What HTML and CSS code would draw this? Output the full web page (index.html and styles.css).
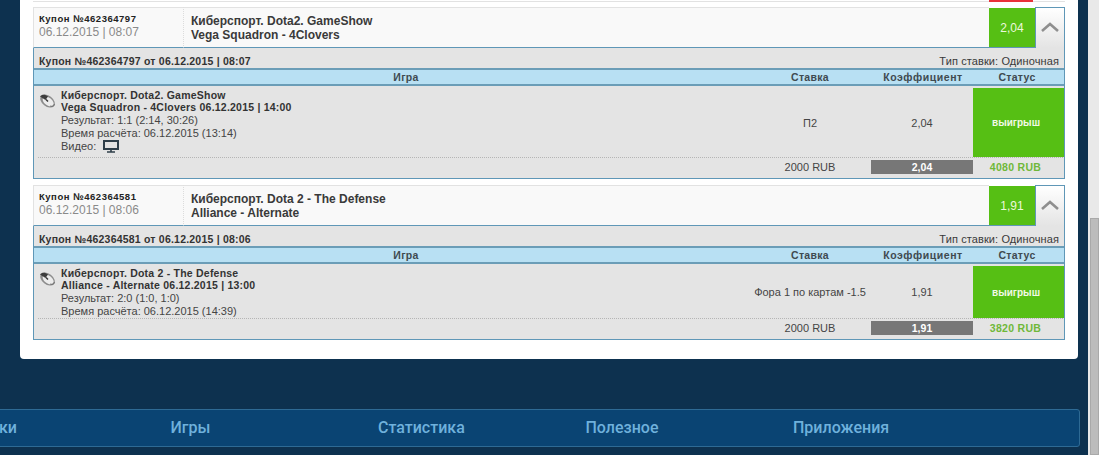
FILE: index.html
```html
<!DOCTYPE html>
<html lang="ru">
<head>
<meta charset="utf-8">
<title>Купоны</title>
<link rel="stylesheet" href="styles.css">
</head>
<body>
<div class="page">
  <div class="main">
    <div class="card">
      <div class="prev"><span class="prev-odd"></span><span class="prev-end"></span></div>

      <section class="coupon">
        <div class="head">
          <div class="head-id">
            <div class="head-no">Купон №462364797</div>
            <div class="head-date">06.12.2015 | 08:07</div>
          </div>
          <div class="head-event">Киберспорт. Dota2. GameShow<br>Vega Squadron - 4Clovers</div>
          <div class="head-odd">2,04</div>
          <div class="toggle"><svg class="chev" width="18" height="10" viewBox="0 0 18 10"><path d="M1 9 L9 2 L17 9" fill="none" stroke="#8f8f8f" stroke-width="2.6"/></svg></div>
        </div>
        <div class="body">
          <div class="sub"><b>Купон №462364797 от 06.12.2015 | 08:07</b><span>Тип ставки: Одиночная</span></div>
          <div class="grid thead"><div class="th-game">Игра</div><div>Ставка</div><div class="th-odd">Коэффициент</div><div class="th-status">Статус</div></div>
          <div class="grid row row-tall">
            <div class="game">
              <svg class="mouse" width="17" height="16" viewBox="0 0 17 16"><ellipse cx="8.5" cy="8" rx="8.2" ry="5.4" transform="rotate(38 8.5 8)" fill="#8d8d8d"/><ellipse cx="9.2" cy="8.6" rx="6.4" ry="3.8" transform="rotate(38 9.2 8.6)" fill="#ececec"/><path d="M1 3.5 C3 1 6 1.2 9 3.5 L6.5 7 Z" fill="#3d3d3d"/><path d="M7 6.5 L9 8.5" stroke="#333" stroke-width="1.5"/><path d="M11 13 C13 14 15 13 15.5 11" fill="none" stroke="#777" stroke-width="1.2"/></svg>
              <div class="game-text">
                <div class="game-title">Киберспорт. Dota2. GameShow<br>Vega Squadron - 4Clovers 06.12.2015 | 14:00</div>
                <div class="game-info">Результат: 1:1 (2:14, 30:26)<br>Время расчёта: 06.12.2015 (13:14)<br>
                  <span class="video">Видео: <svg class="monitor" width="16" height="13" viewBox="0 0 16 13"><path d="M1 1 H15 V9 H1Z" fill="none" stroke="#2f3f4a" stroke-width="2"/><path d="M8 9 V12 M4 12 H12" stroke="#2f3f4a" stroke-width="1.6"/></svg></span>
                </div>
              </div>
            </div>
            <div class="cell">П2</div>
            <div class="cell">2,04</div>
            <div class="status">выигрыш</div>
          </div>
          <div class="grid total">
            <div></div>
            <div class="cell">2000 RUB</div>
            <div class="total-odd">2,04</div>
            <div class="total-win">4080 RUB</div>
          </div>
        </div>
      </section>

      <section class="coupon">
        <div class="head">
          <div class="head-id">
            <div class="head-no">Купон №462364581</div>
            <div class="head-date">06.12.2015 | 08:06</div>
          </div>
          <div class="head-event">Киберспорт. Dota 2 - The Defense<br>Alliance - Alternate</div>
          <div class="head-odd">1,91</div>
          <div class="toggle"><svg class="chev" width="18" height="10" viewBox="0 0 18 10"><path d="M1 9 L9 2 L17 9" fill="none" stroke="#8f8f8f" stroke-width="2.6"/></svg></div>
        </div>
        <div class="body">
          <div class="sub"><b>Купон №462364581 от 06.12.2015 | 08:06</b><span>Тип ставки: Одиночная</span></div>
          <div class="grid thead"><div class="th-game">Игра</div><div>Ставка</div><div class="th-odd">Коэффициент</div><div class="th-status">Статус</div></div>
          <div class="grid row row-short">
            <div class="game">
              <svg class="mouse" width="17" height="16" viewBox="0 0 17 16"><ellipse cx="8.5" cy="8" rx="8.2" ry="5.4" transform="rotate(38 8.5 8)" fill="#8d8d8d"/><ellipse cx="9.2" cy="8.6" rx="6.4" ry="3.8" transform="rotate(38 9.2 8.6)" fill="#ececec"/><path d="M1 3.5 C3 1 6 1.2 9 3.5 L6.5 7 Z" fill="#3d3d3d"/><path d="M7 6.5 L9 8.5" stroke="#333" stroke-width="1.5"/><path d="M11 13 C13 14 15 13 15.5 11" fill="none" stroke="#777" stroke-width="1.2"/></svg>
              <div class="game-text">
                <div class="game-title">Киберспорт. Dota 2 - The Defense<br>Alliance - Alternate 06.12.2015 | 13:00</div>
                <div class="game-info">Результат: 2:0 (1:0, 1:0)<br>Время расчёта: 06.12.2015 (14:39)</div>
              </div>
            </div>
            <div class="cell">Фора 1 по картам -1.5</div>
            <div class="cell">1,91</div>
            <div class="status">выигрыш</div>
          </div>
          <div class="grid total">
            <div></div>
            <div class="cell">2000 RUB</div>
            <div class="total-odd">1,91</div>
            <div class="total-win">3820 RUB</div>
          </div>
        </div>
      </section>
    </div>

    <nav class="footer">
      <a>Ставки</a><a>Игры</a><a>Статистика</a><a>Полезное</a><a>Приложения</a>
    </nav>
  </div>
  <div class="scrollbar"><div class="thumb"></div></div>
</div>
</body>
</html>
```
FILE: styles.css
```css
* { box-sizing: border-box; }
html, body { margin: 0; padding: 0; height: 100%; overflow: hidden; }
body {
  background: #0d314f;
  font-family: "Liberation Sans", Arial, sans-serif;
  font-size: 11px;
  color: #3a3a3a;
}
.page { display: flex; height: 455px; overflow: hidden; }
.main { flex: 1; min-width: 0; }
.scrollbar { width: 11px; background: #e9e9e9; padding: 218px 0 0 2px; }
.thumb { height: 100%; background: #bcbcbc; border: 1px solid #a9a9a9; }

.card {
  margin: 0 10px 0 20px;
  height: 359px;
  padding: 0 13px;
  background: #fff;
  border-radius: 0 0 4px 4px;
}
.prev { display: flex; height: 2px; margin-bottom: 5px; background: #e2e2e2; border-top: 1px solid #fff; }
.prev-odd { width: 45px; margin-left: 956px; margin-top: -1px; height: 2px; background: #e8323a; }
.prev-end { width: 31px; margin-left: 1px; }

.coupon { margin-bottom: 6px; }
.head { display: flex; height: 41px; }
.head-id {
  width: 150px;
  padding: 5px 0 0 5px;
  background: #f9f9f9;
  border: 1px solid #e2e2e2;
  border-right: 0;
  border-bottom: 1px solid #5f97b7;
}
.head-no { font-size: 9.5px; font-weight: 700; line-height: 12px; color: #222; letter-spacing: .52px; }
.head-date { font-size: 12px; line-height: 14px; color: #8a8a8a; }
.head-event {
  flex: 1;
  padding: 6px 0 0 7px;
  background: #f9f9f9;
  border-top: 1px solid #e2e2e2;
  border-left: 1px dotted #dcdcdc;
  border-bottom: 1px solid #5f97b7;
  font-size: 12px;
  font-weight: 700;
  line-height: 14px;
  color: #3a3a3a;
}
.head-odd {
  width: 46px;
  margin-top: 1px;
  padding-top: 2px;
  background: #56bf14;
  border-bottom: 1px solid #5f97b7;
  color: #ecf8dc;
  font-size: 12px;
  line-height: 36px;
  text-align: center;
}
.toggle {
  width: 30px;
  display: flex;
  justify-content: center;
  padding-top: 14px;
  background: linear-gradient(#ffffff, #e4e4e4);
  border: 1px solid #5f97b7;
  border-bottom: 0;
}
.chev { display: block; }

.body {
  background: #e4e4e4;
  border: 1px solid #5f97b7;
  border-top: 0;
}
.sub {
  display: flex;
  justify-content: space-between;
  align-items: center;
  height: 20px;
  padding: 6px 5px 0 5px;
}
.sub b { font-size: 10.5px; color: #333; letter-spacing: .21px; }
.sub span { font-size: 11px; letter-spacing: .1px; }

.grid { display: grid; grid-template-columns: 715px 122px 102px 1fr; }
.thead {
  height: 18px;
  background: #b8e0f3;
  border-top: 2px solid #6b9db7;
  border-bottom: 2px solid #6b9db7;
  font-size: 10.5px;
  line-height: 14px;
  letter-spacing: .3px;
  text-align: center;
}
.thead > div { font-weight: 700; color: #3f4a50; }
.thead > .th-game { padding-left: 29px; }
.thead > .th-odd { letter-spacing: .55px; padding-left: 2px; }
.thead > .th-status { padding-right: 3px; }

.row { margin-top: 2px; }
.row-tall { height: 69px; }
.row-short { height: 52px; }
.game { display: flex; padding: 1px 0 0 5px; }
.mouse { flex: none; margin: 4px 5px 0 0; }
.game-title { font-size: 10.5px; font-weight: 700; line-height: 12px; letter-spacing: .22px; color: #333; }
.game-info { font-size: 11px; line-height: 13px; margin-top: 1px; color: #444; }
.video { display: inline-flex; align-items: flex-start; gap: 7px; }
.monitor { margin-top: 0; }
.cell { display: flex; align-items: center; justify-content: center; font-size: 11px; color: #444; }
.status {
  display: flex;
  align-items: center;
  justify-content: center;
  padding-right: 5px;
  background: #56bf14;
  color: #f1f9e6;
  font-size: 10px;
  font-weight: 700;
}
.total {
  height: 21px;
  margin-left: 4px;
  grid-template-columns: 711px 122px 102px 1fr;
  align-items: center;
  background-image: linear-gradient(90deg, #b5b5b5 50%, transparent 50%);
  background-size: 2px 1px;
  background-repeat: repeat-x;
  background-position: 0 0;
  padding-top: 1px;
}
.total .cell { height: 100%; padding-bottom: 2px; }
.total-odd {
  height: 14px;
  margin-bottom: 2px;
  background: #777;
  color: #fff;
  font-size: 10.5px;
  font-weight: 700;
  line-height: 14px;
  text-align: center;
}
.total-win {
  padding: 0 6px 2px 0;
  color: #6fb83a;
  font-size: 10.5px;
  font-weight: 700;
  letter-spacing: .3px;
  text-align: center;
}

.footer {
  display: grid;
  grid-template-columns: repeat(5, 207.5px);
  margin: 50px 8px 0 -38px;
  height: 38px;
  background: #0a4473;
  border: 1px solid #2e6a94;
  border-radius: 3px;
  font-family: Roboto, "Liberation Sans", sans-serif;
  font-size: 16px;
  font-weight: 500;
  line-height: 36px;
  color: #6fb1dc;
}
```
